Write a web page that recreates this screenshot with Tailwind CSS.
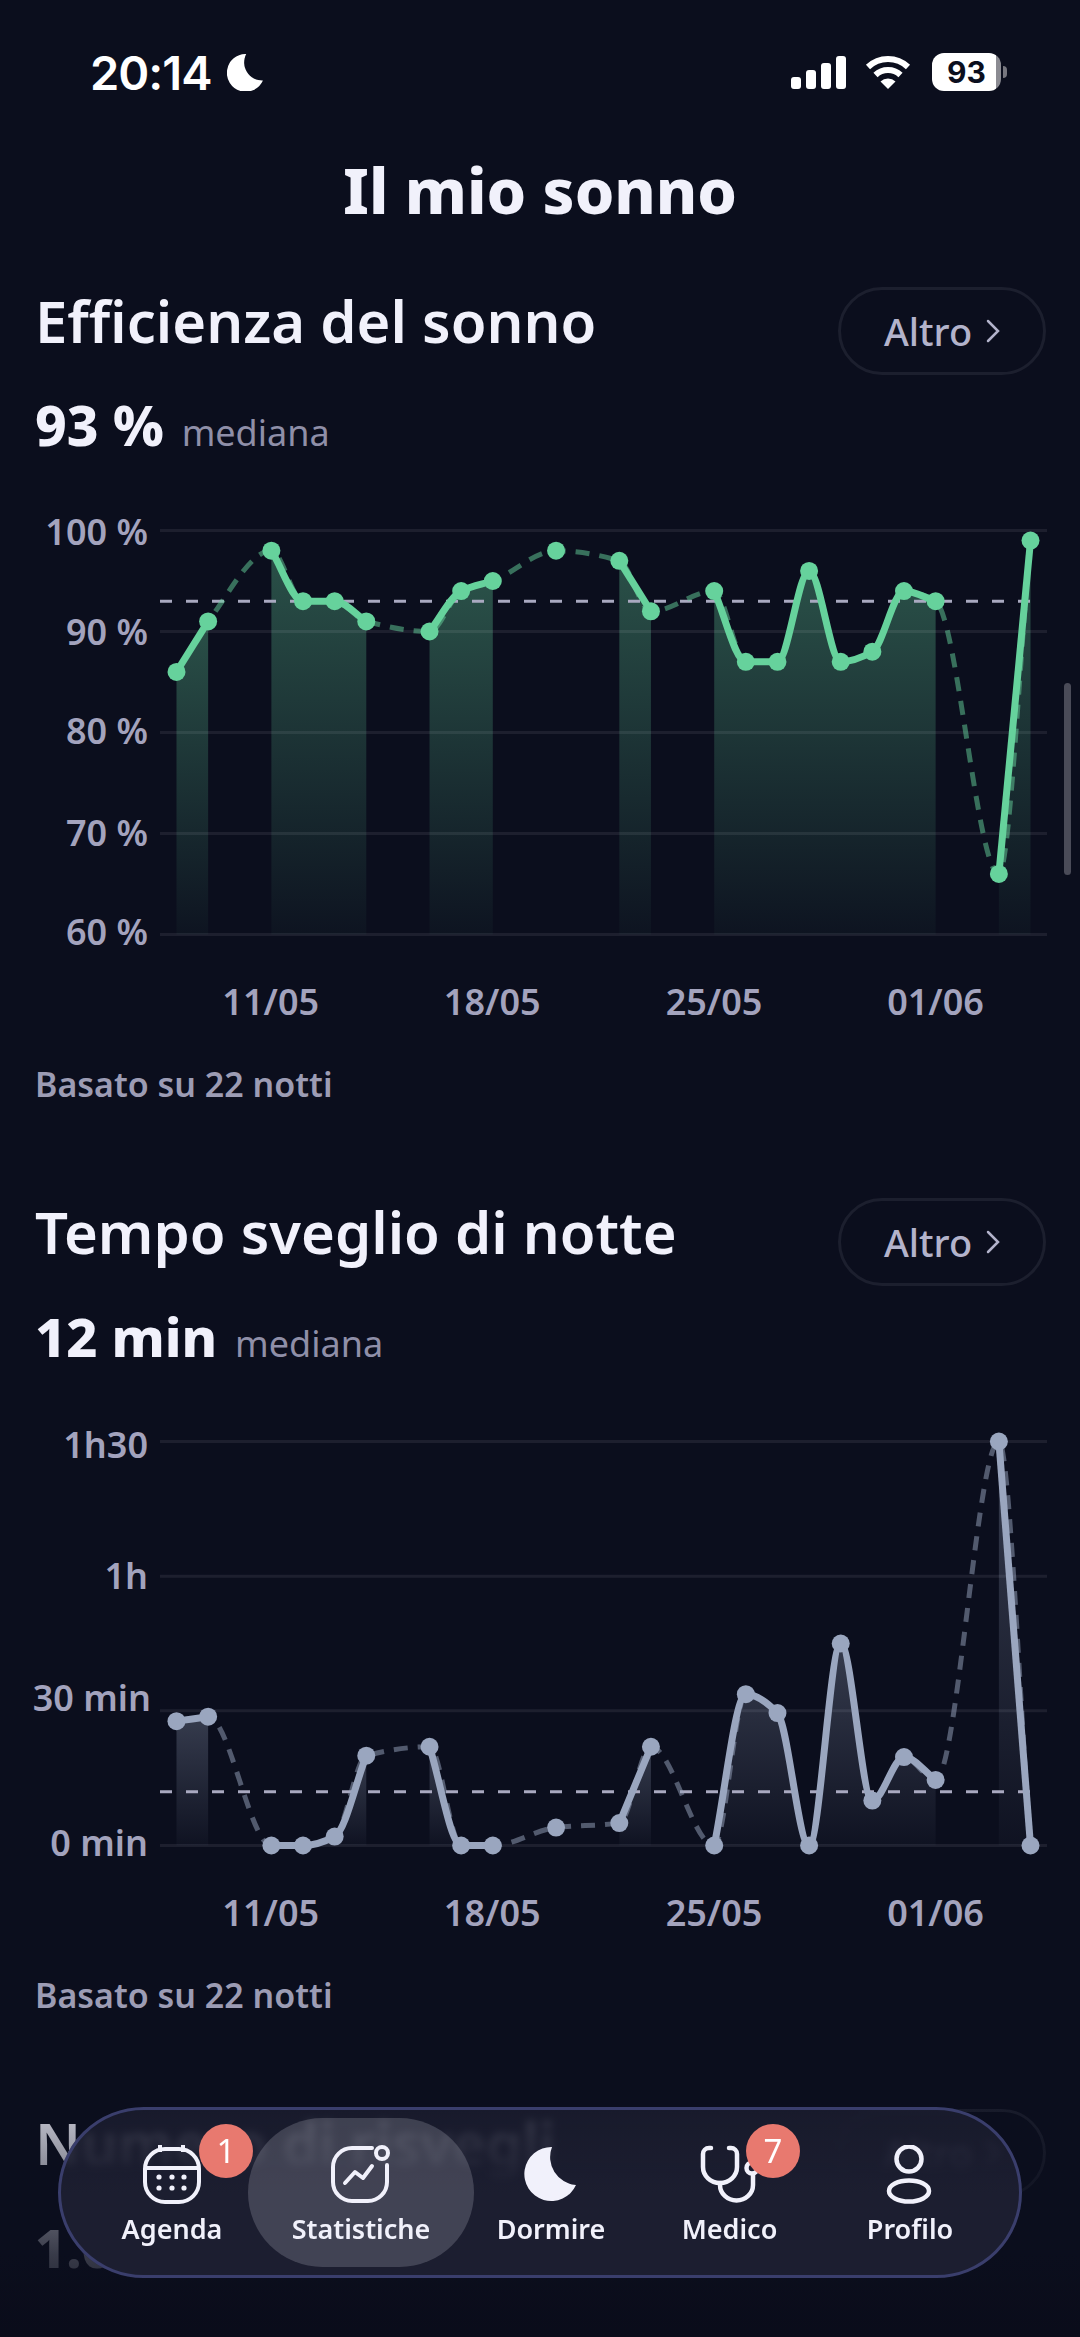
<!DOCTYPE html>
<html lang="it">

<head>
    <meta charset="UTF-8">
    <meta name="viewport" content="width=device-width, initial-scale=1.0">
    <title>Il mio sonno</title>
    <script src="https://cdn.jsdelivr.net/npm/@tailwindcss/browser@4"></script>
</head>

<body class="bg-[#0b0e1d] font-['Noto_Sans','Lato',sans-serif]">
    <div class="relative w-[1080px] h-[2337px] overflow-hidden text-[#f1f1fb]">

        <!-- status bar -->
        <div class="flex items-center justify-between h-[38px] mt-[53px] pl-[90px] pr-[73px] font-['Inter',sans-serif]">
            <div class="flex items-center gap-[16px]">
                <span class="text-[47px] leading-none font-semibold text-white tracking-[-1px]">20:14</span>
                <svg class="w-[37px] h-[37px]" viewBox="0 0 52 53" fill="#fff"><path d="M27 0A27 27 0 1 0 51 38A26 26 0 0 1 27 0Z" /></svg>
            </div>
            <div class="flex items-center">
                <div class="flex items-end gap-[5px] h-[33px]">
                    <div class="w-[10px] h-[12px] rounded-[3px] bg-white"></div>
                    <div class="w-[10px] h-[19px] rounded-[3px] bg-white"></div>
                    <div class="w-[10px] h-[26px] rounded-[3px] bg-white"></div>
                    <div class="w-[10px] h-[33px] rounded-[3px] bg-white"></div>
                </div>
                <svg class="w-[46px] h-[33px] ml-[19px]" viewBox="0 0 46 33" fill="none" stroke="#fff" stroke-width="6">
                    <path d="M3 11A29 29 0 0 1 43 11" />
                    <path d="M10.5 19A18 18 0 0 1 35.5 19" />
                    <path d="M23 33L15.5 25.5A11 11 0 0 1 30.5 25.5Z" fill="#fff" stroke="none" />
                </svg>
                <div class="flex items-center justify-center w-[69px] h-[38px] ml-[21px] rounded-[12px] bg-[linear-gradient(90deg,#fff_93%,#8b8b92_93%)] text-[#0b0e1d] text-[30px] font-bold leading-none">93</div>
                <div class="w-[4px] h-[12px] ml-[2px] rounded-r-full bg-[#77777f]"></div>
            </div>
        </div>

        <h1 class="h-[80px] mt-[59px] mb-[57px] text-center text-[63px] leading-[80px] font-extrabold">Il mio sonno</h1>

        <main class="flex flex-col gap-[91px] pl-[35px] pr-[34px]">
            <section>
                <div class="flex items-center justify-between h-[88px]">
                    <h2 class="text-[58px] leading-[74px] mb-[20px] font-semibold">Efficienza del sonno</h2>
                    <button class="flex items-center gap-[14px] h-[88px] w-[208px] justify-center rounded-full border-[3px] border-[#1c1f2e] text-[38px] font-medium text-[#b3b3cb]">Altro
                        <svg class="w-[14px] h-[26px]" viewBox="0 0 14 26" fill="none" stroke="#b3b3cb" stroke-width="2.5" stroke-linecap="round"><path d="M2 3L12 13L2 23" /></svg>
                    </button>
                </div>
                <div class="flex items-baseline gap-[18px] h-[60px] mt-[20px] leading-[60px]">
                    <span class="text-[55px] font-extrabold">93 %</span>
                    <span class="text-[36px] text-[#8f8fa8]">mediana</span>
                </div>
                <svg id="chart-sleep" class="block w-[1080px] h-[540px] -ml-[35px] mt-[45px]" viewBox="0 0 1080 540"></svg>
                <p class="h-[45px] mt-[22px] text-[34px] leading-[45px] font-semibold text-[#9c9cb4]">Basato su 22 notti</p>
            </section>

            <section>
                <div class="flex items-center justify-between h-[88px]">
                    <h2 class="text-[58px] leading-[74px] mb-[20px] font-semibold">Tempo sveglio di notte</h2>
                    <button class="flex items-center gap-[14px] h-[88px] w-[208px] justify-center rounded-full border-[3px] border-[#1c1f2e] text-[38px] font-medium text-[#b3b3cb]">Altro
                        <svg class="w-[14px] h-[26px]" viewBox="0 0 14 26" fill="none" stroke="#b3b3cb" stroke-width="2.5" stroke-linecap="round"><path d="M2 3L12 13L2 23" /></svg>
                    </button>
                </div>
                <div class="flex items-baseline gap-[18px] h-[60px] mt-[20px] leading-[60px]">
                    <span class="text-[54px] font-extrabold">12 min</span>
                    <span class="text-[36px] text-[#8f8fa8]">mediana</span>
                </div>
                <svg id="chart-awake" class="block w-[1080px] h-[540px] -ml-[35px] mt-[45px]" viewBox="0 0 1080 540"></svg>
                <p class="h-[45px] mt-[22px] text-[34px] leading-[45px] font-semibold text-[#9c9cb4]">Basato su 22 notti</p>
            </section>

            <section>
                <div class="flex items-center justify-between h-[88px]">
                    <h2 class="text-[58px] leading-[74px] mb-[20px] font-semibold">Numero di risvegli</h2>
                    <button class="flex items-center gap-[14px] h-[88px] w-[208px] justify-center rounded-full border-[3px] border-[#1c1f2e] text-[38px] font-medium text-[#b3b3cb]">Altro
                        <svg class="w-[14px] h-[26px]" viewBox="0 0 14 26" fill="none" stroke="#b3b3cb" stroke-width="2.5" stroke-linecap="round"><path d="M2 3L12 13L2 23" /></svg>
                    </button>
                </div>
                <div class="flex items-baseline gap-[18px] h-[60px] mt-[20px] leading-[60px]">
                    <span class="text-[54px] font-extrabold">1.0</span>
                </div>
            </section>
        </main>

        <!-- scrollbar -->
        <div class="absolute left-[1064px] top-[683px] w-[7px] h-[192px] rounded-full bg-[#4a4b58]"></div>

        <!-- content fades out towards the bottom edge -->
        <div class="absolute left-0 top-[2060px] w-full h-[277px] bg-[linear-gradient(180deg,#0b0e1d00_0%,#0b0e1dcc_70%,#0a0c1a_100%)]"></div>

        <!-- floating tab bar -->
        <nav class="absolute left-[58px] top-[2107px] flex w-[964px] h-[171px] pl-[17px] rounded-full border-[3px] border-[#3a3e6c] bg-[linear-gradient(180deg,#1c1e30cc_0%,#1c1e30e6_30%,#1c1e30_50%)] backdrop-blur-[4px] text-[27px] font-semibold">
            <a class="relative flex flex-col items-center w-[188px] pt-[35px]">
                <svg class="w-[60px] h-[60px]" viewBox="-2 0 60 60" fill="none" stroke="#f1f1fb" stroke-width="4">
                    <rect x="1" y="4" width="54" height="53" rx="20" />
                    <path d="M2 23H54M16 0V7M39 0V7" />
                    <g fill="#f1f1fb" stroke="none">
                        <circle cx="15" cy="32" r="2.6" /><circle cx="28" cy="32" r="2.6" /><circle cx="40" cy="32" r="2.6" />
                        <circle cx="15" cy="43" r="2.6" /><circle cx="28" cy="43" r="2.6" /><circle cx="40" cy="43" r="2.6" />
                    </g>
                </svg>
                <span class="mt-[6px] leading-[36px]">Agenda</span>
                <span class="absolute left-[121px] top-[14px] flex items-center justify-center w-[54px] h-[54px] rounded-full bg-[#e8796f] text-[33px] font-normal text-white">1</span>
            </a>
            <a class="relative flex flex-col items-center w-[190px] pt-[35px]">
                <span class="absolute left-[-18px] top-[8px] w-[226px] h-[149px] rounded-full bg-[#f1f1fb]/18"></span>
                <svg class="relative w-[60px] h-[60px]" viewBox="0 0 60 60" fill="none" stroke="#f1f1fb" stroke-width="4" stroke-linecap="round" stroke-linejoin="round">
                    <path d="M41 3H21A19 19 0 0 0 2 22V37A19 19 0 0 0 21 56H37A19 19 0 0 0 56 37V20" />
                    <circle cx="51" cy="8" r="6" />
                    <path d="M14 38L24 27L32 33L41 21" />
                </svg>
                <span class="relative mt-[6px] leading-[36px]">Statistiche</span>
            </a>
            <a class="flex flex-col items-center w-[184px] pl-[6px] pt-[35px]">
                <svg class="w-[60px] h-[60px]" viewBox="-4 -2 60 60" fill="#f1f1fb"><path d="M27 0A27 27 0 1 0 51 38A28 28 0 0 1 27 0Z" /></svg>
                <span class="mt-[6px] leading-[36px]">Dormire</span>
            </a>
            <a class="relative flex flex-col items-center w-[179px] pt-[35px]">
                <svg class="w-[60px] h-[60px]" viewBox="0 0 60 60" fill="none" stroke="#f1f1fb" stroke-width="4.5" stroke-linecap="round">
                    <path d="M11 3H9A6 6 0 0 0 3 9V22A17 16 0 0 0 37 22V9A6 6 0 0 0 31 3H29" />
                    <path d="M20 38V40A16 15 0 0 0 53 40V29" />
                    <circle cx="52" cy="23" r="5.5" />
                </svg>
                <span class="mt-[6px] leading-[36px]">Medico</span>
                <span class="absolute left-[106px] top-[14px] flex items-center justify-center w-[54px] h-[54px] rounded-full bg-[#e8796f] text-[33px] font-normal text-white">7</span>
            </a>
            <a class="flex flex-col items-center w-[182px] pt-[35px]">
                <svg class="w-[60px] h-[60px]" viewBox="0 0 60 60" fill="none" stroke="#f1f1fb" stroke-width="4.5">
                    <circle cx="29" cy="14" r="12.5" />
                    <ellipse cx="29" cy="46" rx="20" ry="10.5" />
                </svg>
                <span class="mt-[6px] leading-[36px]">Profilo</span>
            </a>
        </nav>
    </div>

    <script>
        const TOP = 30.5, BOTTOM = 434.5;
        const X0 = 176.5, DX = 31.63;

        // null = night without data
        const sleepData = [86, 91, null, 98, 93, 93, 91, null, 90, 94, 95, null, 98, null, 97, 92, null, 94, 87, 87, 96, 87, 88, 94, 93, null, 66, 99];
        const awakeData = [27.7, 28.7, null, 0, 0, 2, 20, null, 22, 0, 0, null, 4, null, 5, 22, null, 0, 33.7, 29.5, 0, 45, 10, 19.7, 14.6, null, 90, 0];

        // same curve as d3 curveMonotoneX
        function monotonePath(pts) {
            const n = pts.length;
            if (n < 2) return '';
            const slopes = [];
            for (let i = 0; i < n - 1; i++) slopes.push((pts[i + 1][1] - pts[i][1]) / (pts[i + 1][0] - pts[i][0]));
            const tangents = [slopes[0]];
            for (let i = 1; i < n - 1; i++) {
                const a = slopes[i - 1], b = slopes[i];
                tangents.push(a * b <= 0 ? 0 : 2 * a * b / (a + b));
            }
            tangents.push(slopes[n - 2]);
            let d = `M${pts[0][0]} ${pts[0][1]}`;
            for (let i = 0; i < n - 1; i++) {
                const h = (pts[i + 1][0] - pts[i][0]) / 3;
                d += `C${pts[i][0] + h} ${pts[i][1] + tangents[i] * h} ${pts[i + 1][0] - h} ${pts[i + 1][1] - tangents[i + 1] * h} ${pts[i + 1][0]} ${pts[i + 1][1]}`;
            }
            return d;
        }

        function drawChart(id, opts) {
            const toY = (v) => BOTTOM - (v - opts.min) / (opts.max - opts.min) * (BOTTOM - TOP);
            const pts = [];
            const segments = [];
            let current = [];
            opts.data.forEach((v, i) => {
                if (v === null) {
                    if (current.length) segments.push(current);
                    current = [];
                    return;
                }
                const p = [X0 + i * DX, toY(v)];
                pts.push(p);
                current.push(p);
            });
            if (current.length) segments.push(current);

            let svg = `<defs><linearGradient id="${id}-fill" x1="0" y1="0" x2="0" y2="1">
                <stop offset="0" stop-color="${opts.color}" stop-opacity="${opts.fillTop}" />
                <stop offset="1" stop-color="${opts.color}" stop-opacity="0.03" /></linearGradient></defs>`;

            segments.forEach((seg) => {
                const last = seg[seg.length - 1];
                svg += `<path d="${monotonePath(seg)}L${last[0]} ${BOTTOM}L${seg[0][0]} ${BOTTOM}Z" fill="url(#${id}-fill)" />`;
            });
            opts.ticks.forEach((t) => {
                const y = toY(t.v);
                svg += `<line x1="160" x2="1047" y1="${y}" y2="${y}" stroke="#f1f1fb" stroke-opacity="0.08" stroke-width="3" />`;
                svg += `<text x="${t.x || 148}" y="${y + 13 + (t.dy || 0)}" text-anchor="end" font-size="36" font-weight="600" fill="#a3a3bd">${t.label}</text>`;
            });
            [['11/05', 270.7], ['18/05', 492.2], ['25/05', 714], ['01/06', 935.5]].forEach(([label, x]) => {
                svg += `<text x="${x}" y="515" text-anchor="middle" font-size="36" font-weight="600" fill="#a3a3bd">${label}</text>`;
            });
            const m = toY(opts.median);
            svg += `<line x1="160" x2="1040" y1="${m}" y2="${m}" stroke="#a9a9c0" stroke-width="3" stroke-dasharray="12 14" />`;
            svg += `<path d="${monotonePath(pts)}" fill="none" stroke="${opts.color}" stroke-opacity="0.5" stroke-width="5" stroke-dasharray="14 10" />`;
            segments.forEach((seg) => {
                svg += `<path d="${monotonePath(seg)}" fill="none" stroke="${opts.color}" stroke-width="7" stroke-linejoin="round" />`;
            });
            pts.forEach((p) => {
                svg += `<circle cx="${p[0]}" cy="${p[1]}" r="9" fill="${opts.color}" />`;
            });
            document.getElementById(id).innerHTML = svg;
        }

        drawChart('chart-sleep', {
            data: sleepData, min: 60, max: 100, median: 93, color: '#66d29c', fillTop: 0.34,
            ticks: [{ v: 100, label: '100 %', dy: 1.5 }, { v: 90, label: '90 %' }, { v: 80, label: '80 %', dy: -1.5 }, { v: 70, label: '70 %', dy: -1 }, { v: 60, label: '60 %', dy: -3 }]
        });
        drawChart('chart-awake', {
            data: awakeData, min: 0, max: 90, median: 12, color: '#9aa6bf', fillTop: 0.3,
            ticks: [{ v: 90, label: '1h30', dy: 3 }, { v: 60, label: '1h' }, { v: 30, label: '30 min', x: 151, dy: -13 }, { v: 0, label: '0 min', dy: -3 }]
        });
    </script>
</body>

</html>
